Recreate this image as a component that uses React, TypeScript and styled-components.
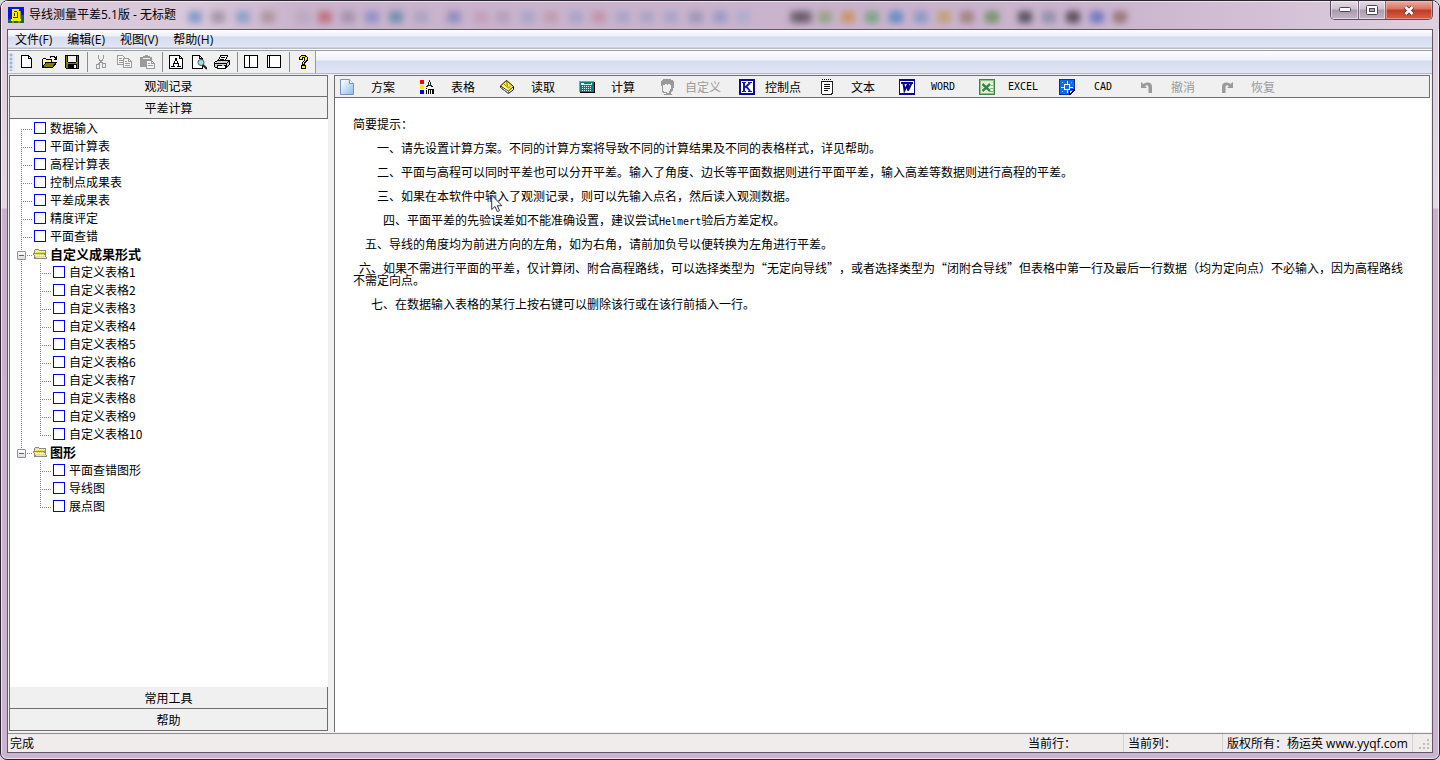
import React from "react";
import styled, { createGlobalStyle, css } from "styled-components";

const SONG = '"Noto Sans CJK SC", sans-serif';
const UI = '"Open Sans", "Noto Sans CJK SC", sans-serif';
const LINE = "#6f6f6f";
const FACE = "#f0f0f0";

const GlobalStyle = createGlobalStyle`
  *, *::before, *::after { box-sizing: border-box; }
  body { margin: 0; background: #d8d4da; color: #000; font: 12px/18px ${SONG}; text-spacing-trim: space-all; }
  button { font: inherit; color: inherit; border: 0; padding: 0; margin: 0; background: none; border-radius: 0; }
  svg { display: block; flex: none; }
`;

/* ---------- window frame ---------- */

const Frame = styled.div`
  display: flex;
  flex-direction: column;
  min-height: 100vh;
  padding: 0 6px 6px;
  border: 1px solid #2a2430;
  border-radius: 8px 8px 7px 7px;
  background: linear-gradient(180deg, #ddcfde 0, #e4d8e4 207px, #cbb0cc 208px, #ccb3d0 100%);
  box-shadow: inset 0 0 0 1px rgba(255, 255, 255, 0.65);
`;

const TitleBar = styled.header`
  position: relative;
  display: flex;
  align-items: flex-start;
  height: 28px;
  margin: 0 -6px;
  padding: 0 6px 0 7px;
  border-radius: 7px 7px 0 0;
  overflow: hidden;
  background: linear-gradient(90deg, #dccbdc 0, #d9c8da 190px, #c9b3cd 300px, #c9b3cd 75%, #d3c0d6 88%, #dfd0e0 100%);
  box-shadow: inset 0 1px 0 rgba(255, 255, 255, 0.6), inset 1px 0 0 rgba(255, 255, 255, 0.6);
`;

const Ghosts = styled.svg`
  position: absolute;
  left: 0;
  top: 0;
  filter: blur(3px);
`;

const Title = styled.h1`
  position: relative;
  flex: 1;
  margin: 5px 0 0 5px;
  font: 12px/18px ${UI};
`;

const AppIcon = styled.svg`
  position: relative;
  margin-top: 6px;
`;

const Captions = styled.div`
  position: relative;
  display: flex;
  height: 19px;
  border: 1px solid #5b4c5e;
  border-top: 0;
  border-radius: 0 0 5px 5px;
  overflow: hidden;
`;

const Caption = styled.button<{ $w: number; $close?: boolean }>`
  display: grid;
  place-items: center;
  width: ${(p) => p.$w}px;
  box-shadow: inset 0 0 0 1px rgba(255, 255, 255, 0.5);
  background: linear-gradient(#e5dbe6 0, #cfc1d2 45%, #a999ad 50%, #c4b5c8 100%);
  & + & { border-left: 1px solid #76687a; }
  ${(p) =>
    p.$close &&
    css`
      background: linear-gradient(#eab0a4 0, #d9705e 45%, #c03a22 50%, #d8614a 100%);
      box-shadow: inset 0 0 0 1px rgba(255, 200, 190, 0.5);
    `}
`;

const Client = styled.div`
  flex: 1;
  display: flex;
  flex-direction: column;
  border: 1px solid #5e5862;
  background: ${FACE};
`;

/* ---------- menu and standard toolbar ---------- */

const MenuBar = styled.nav`
  display: flex;
  height: 21px;
  padding-left: 7px;
  gap: 15px;
  border-bottom: 1px solid #9c9ca6;
  font: 12px/20px ${UI};
  background: linear-gradient(#fdfdff 0, #eef1f9 6px, #d5dcee 7px, #e2e6f5 17px, #b9bdca 18px, #b9bdca 19px, #fff 19px);
`;

const ToolRow = styled.div`
  display: flex;
  height: 24px;
  border-bottom: 1px solid ${FACE};
  background: linear-gradient(#fdfdff 0, #eef1f9 9px, #d5dcee 10px, #e2e6f5 22px, #b3b7c4 22px);
`;

const ToolBand = styled.div`
  display: flex;
  align-items: stretch;
  height: 22px;
  background: ${FACE};
  border-right: 1px solid #9a9a9a;
`;

const Grip = styled.div`
  width: 7px;
  margin: 2px 0;
  background: radial-gradient(circle at 3px 2px, #a9b3d0 1px, transparent 2px) 0 0 / 7px 4px #e6eaf6;
`;

const ToolButton = styled.button`
  width: 23px;
  padding: 3px 4px 3px 3px;
`;

const Separator = styled.span`
  width: 6px;
  margin: 1px 0;
  background: linear-gradient(#8a8a8a, #8a8a8a) 3px 0 / 1px 100% no-repeat;
`;

/* ---------- body ---------- */

const Body = styled.div`
  flex: 1;
  display: flex;
  gap: 6px;
  padding: 0 1px 1px;
`;

const Sidebar = styled.aside`
  flex: none;
  display: flex;
  flex-direction: column;
  width: 319px;
  margin-bottom: 1px;
  border-left: 1px solid ${LINE};
  background: #fff;
`;

const SideTab = styled.button<{ $top?: boolean }>`
  height: 22px;
  text-align: center;
  line-height: 20px;
  background: ${FACE};
  border-right: 1px solid ${LINE};
  border-bottom: 1px solid ${LINE};
  ${(p) => p.$top && `border-top: 1px solid ${LINE};`}
`;

const Tree = styled.ul`
  flex: 1;
  margin: 0;
  padding: 0 0 0 11px;
  list-style: none;
`;

const SubTree = styled.ul<{ $last?: boolean }>`
  margin: 0;
  padding: 0 0 0 19px;
  list-style: none;
  background: ${(p) =>
    p.$last ? "none" : "repeating-linear-gradient(#808080 0 1px, transparent 1px 2px) 0 0 / 1px 100% no-repeat"};
`;

const NodeLabel = styled.label<{ $last?: boolean; $first?: boolean }>`
  display: flex;
  align-items: center;
  height: 18px;
  padding-left: 13px;
  background:
    repeating-linear-gradient(90deg, #808080 0 1px, transparent 1px 2px) 0 10px / 12px 1px no-repeat,
    repeating-linear-gradient(#808080 0 1px, transparent 1px 2px) 0 ${(p) => (p.$first ? 10 : 0)}px / 1px
      ${(p) => (p.$last ? "10px" : "100%")} no-repeat;
`;

const NodeBox = styled.input`
  appearance: none;
  width: 12px;
  height: 12px;
  margin: 0 4px 0 0;
  border: 1px solid #0000ff;
  background: #fff;
  &:checked { background: #0000ff; }
`;

const FolderRow = styled.div<{ $last?: boolean }>`
  display: flex;
  align-items: center;
  height: 18px;
  font-size: 13px;
  font-weight: 700;
  background:
    repeating-linear-gradient(90deg, #808080 0 1px, transparent 1px 2px) 4px 10px / 8px 1px no-repeat,
    repeating-linear-gradient(#808080 0 1px, transparent 1px 2px) 0 0 / 1px ${(p) => (p.$last ? "6px" : "100%")} no-repeat;
  svg { margin-right: 3px; }
`;

const Toggle = styled.button`
  width: 9px;
  height: 9px;
  margin: 2px 7px 0 -4px;
  border: 1px solid #919191;
  border-radius: 1px;
  background: linear-gradient(#4a62a5, #4a62a5) center / 5px 1px no-repeat, linear-gradient(#fff, #dcdcdc);
`;

const Panel = styled.main`
  flex: 1;
  min-width: 0;
  display: flex;
  flex-direction: column;
  border-left: 1px solid ${LINE};
  background: #fff;
`;

const ActionBar = styled.div`
  display: flex;
  height: 23px;
  margin-right: 1px;
  padding-left: 4px;
  border: 1px solid ${LINE};
  border-left: 0;
  background: ${FACE};
`;

const Action = styled.button`
  display: grid;
  grid-template-columns: 16px 40px;
  column-gap: 8px;
  align-items: center;
  width: 80px;
  height: 21px;
  white-space: nowrap;
  text-align: center;
  &:disabled { color: #9b9b9b; }
`;

const Latin = styled.span`
  font: 10px/8px "DejaVu Sans Mono", monospace;
`;

const Notes = styled.article`
  position: relative;
  flex: 1;
  padding: 20px 20px 0 18px;
  line-height: 12px;
`;

const Note = styled.p<{ $indent?: number }>`
  margin: 0 0 12px;
  text-indent: ${(p) => p.$indent ?? 0}px;
`;

const Pointer = styled.svg`
  position: absolute;
  left: 156px;
  top: 96px;
`;

/* ---------- status bar ---------- */

const StatusBar = styled.footer`
  display: flex;
  height: 19px;
  border-top: 1px solid #8f8f8f;
  background: #f0ecec;
  font: 12px/19px ${UI};
`;

const StatusCell = styled.span<{ $w?: number }>`
  ${(p) => (p.$w ? `width: ${p.$w}px; padding-left: 4px; border-right: 1px solid #d6d2d2;` : "flex: 1; padding-left: 2px;")}
  white-space: nowrap;
`;

const SizeGrip = styled.svg`
  margin: 5px 2px 0 6px;
`;

/* ---------- icons ---------- */

const Icon = ({ children, soft }: { children: React.ReactNode; soft?: boolean }) => (
  <svg width="16" height="16" viewBox="0 0 16 16" fill="none" shapeRendering={soft ? "auto" : "crispEdges"} aria-hidden="true">
    {children}
  </svg>
);

const NewIcon = () => (
  <Icon>
    <path d="M3.5 1.5h7l3 3v9h-10z" fill="#fff" stroke="#000" />
    <path d="M10.5 1.5v3h3" stroke="#000" />
  </Icon>
);
const OpenIcon = () => (
  <Icon>
    <path d="M1.5 13.5v-8l1-1h2l1 1h5v3" fill="#ffff80" stroke="#000" />
    <path d="M1.5 13.5l3.5-5h10.5l-4 5z" fill="#808000" stroke="#000" />
    <path d="M9 3.5l1-1h3l1 1 1 1M15.5 2v3h-3" stroke="#000" />
  </Icon>
);
const SaveIcon = () => (
  <Icon>
    <path d="M1.5 1.5h13v13h-12l-1-1z" fill="#808000" stroke="#000" />
    <path d="M4 2h8v6H4z" fill="#f0f0f0" />
    <path d="M3 2h1v6H3zM12 2h1v6h-1zM4 8h8v1H4zM4 10h9v4H4z" fill="#000" />
    <path d="M10 11h2v3h-2z" fill="#fff" />
  </Icon>
);
const CutIcon = () => (
  <Icon>
    <path d="M5.5 1v3l1 2 4 4M10.5 1v3l-1 2-4 4" stroke="#9a9a9a" />
    <path d="M3.5 10.5h3v4h-3zM9.5 9.5h3v4h-3z" stroke="#9a9a9a" />
  </Icon>
);
const CopyIcon = () => (
  <Icon>
    <path d="M1.5 1.5h5l2 2v7h-7z" fill="#f6f6f6" stroke="#9a9a9a" />
    <path d="M3 4.5h3M3 6.5h4M3 8.5h4" stroke="#9a9a9a" />
    <path d="M7.5 4.5h5l3 3v6h-8z" fill="#f6f6f6" stroke="#9a9a9a" />
    <path d="M12.5 4.5v3h3M9 7.5h2M9 9.5h5M9 11.5h5" stroke="#9a9a9a" />
  </Icon>
);
const PasteIcon = () => (
  <Icon>
    <path d="M1 3h3V2h2V1h3v1h2v1h2v4H7v6H1z" fill="#9a9a9a" />
    <path d="M4 4h7v1H4z" fill="#eee" />
    <path d="M7.5 6.5h5l3 3v5h-8z" fill="#f6f6f6" stroke="#9a9a9a" />
    <path d="M12.5 6.5v3h3M9 9.5h2M9 11.5h5" stroke="#9a9a9a" />
  </Icon>
);
const FontIcon = () => (
  <Icon>
    <path d="M1.5 1.5h10l3 3v10h-13z" fill="#fff" stroke="#000" />
    <path d="M11.5 1.5v3h3" stroke="#000" />
    <path d="M3 12.5h4M9 12.5h4M7 4.500h2M5 9.500h5" stroke="#000" />
    <path d="M7 5h1v2H7zM6 7h1v3H6zM5 10h1v2H5zM8 5h1v2H8zM9 7h1v2H9zM9 9h2v3h-1v-2H9z" fill="#000" />
  </Icon>
);
const PreviewIcon = () => (
  <Icon>
    <path d="M11.5 14.5h-10v-13h7l3 3v9" fill="#fff" stroke="#000" />
    <path d="M8.5 1.5v3h3" stroke="#000" />
    <circle cx="10" cy="8.5" r="3" fill="#8fe8f0" stroke="#555" shapeRendering="auto" />
    <path d="M12 11l4 4" stroke="#222" strokeWidth="2" shapeRendering="auto" />
  </Icon>
);
const PrintIcon = () => (
  <Icon>
    <path d="M4.5 6.5l2-5h7l-2 5" fill="#fff" stroke="#000" />
    <path d="M7 3.5h4M6 5.5h4" stroke="#000" />
    <path d="M.5 8.5l3-2h12v4l-3 3h-11l-1-1z" fill="#d0d0d0" stroke="#000" />
    <path d="M1 9.5h11.5M12.5 9.5l3-3M12.5 9.5v4" stroke="#000" />
    <path d="M3.5 11.5h8v3h-8z" fill="#fff" stroke="#000" />
    <path d="M8 11h2v1H8z" fill="#e0e000" />
  </Icon>
);
const SplitIcon = ({ at }: { at: number }) => (
  <Icon>
    <path d="M1.5 1.5h13v12h-13z" fill="#fff" stroke="#000" />
    <path d={`M${at}.5 2v11`} stroke="#000" />
  </Icon>
);
const HelpIcon = () => (
  <Icon>
    <path d="M6 1h5v1h1v1h1v4h-1v1h-1v1h-1v2h1v4H6v-4h1V8h1V7h1V4H8v2H4V3h1V2h1z" fill="#000" />
    <path d="M6 2h4v1h2v3h-1v1h-1v1H9v2H8V8h1V7h1V3H7v2H5V3h1zM7 12h3v2H7z" fill="#ffee00" />
  </Icon>
);

const PlanIcon = () => (
  <Icon soft>
    <defs>
      <linearGradient id="plan" x1="0" y1="0" x2="1" y2="1">
        <stop offset="0.200" stopColor="#eef6ff" />
        <stop offset="1" stopColor="#86bcf0" />
      </linearGradient>
    </defs>
    <path d="M1.500.5h9l4 4v11h-13z" fill="url(#plan)" stroke="#7a90c0" />
    <path d="M10.500.5v4h4" fill="#fff" stroke="#7a90c0" />
  </Icon>
);
const TableIcon = () => (
  <Icon>
    <path d="M1 1h4v4H1z" fill="#f00" />
    <path d="M1 6h4v4H1z" fill="#ffe800" />
    <path d="M1 11h4v4H1z" fill="#00f" />
    <path d="M10 1h1v2h-1zM9 3h1v3H9zM11 3h1v3h-1zM8 6h5v1H8zM7 7h2v1H7zM12 7h2v1h-2z" fill="#222" />
    <path d="M7 9h1v1H7zM7 11h1v4H7zM9 10h3v5h-1v-4h-1v4H9zM12 10h3v5h-2v-4h-1z" fill="#000" />
  </Icon>
);
const ReadIcon = () => (
  <Icon soft>
    <path d="M1.500 7l6-5.500 7 6v3l-5 4-8-6z" fill="#fff" stroke="#111" />
    <path d="M1.500 7l6-5.500 7 6-5 4.500z" fill="#fff04a" stroke="#3a3a00" />
    <path d="M4.500 4.500l5 4.500 2.500-2.500M7.500 2l1 5" stroke="#8a7a00" />
    <path d="M4 7l5 4" stroke="#fff" />
    <path d="M2 9l7 5M9.500 12v2.500" stroke="#777" />
  </Icon>
);
const CalcIcon = () => (
  <Icon>
    <path d="M1 3h15v11H1z" fill="#000" />
    <path d="M0 2h15v11H0z" fill="#008080" />
    <path d="M.5 12.5v-10h14" stroke="#40c0c0" />
    <path d="M2 4h11v2H2z" fill="#c8fff0" />
    <path d="M5 4h7v1H5z" fill="#008080" />
    <path d="M3 7.5h10M3 9.5h10M3 11.5h10" stroke="#d8ffff" strokeDasharray="1 1" />
  </Icon>
);
const CustomIcon = () => (
  <Icon>
    <path
      d="M4 0h8v1h2v1h1v7h-1v3h-1v1h-1v2h1v1H5v-1h2v-1h3v-2h1v-2h1V6h-1V5H9v1H8V5H6v1H4v3H3V7H2V2h1V1h1z"
      fill="#9a9a9a"
    />
    <path d="M3 9h1v3h1v1h3v1H4v-1H3z" fill="#9a9a9a" />
  </Icon>
);
const ControlIcon = () => (
  <Icon>
    <path d="M0 0h16v16H0z" fill="#0a0a9a" />
    <path d="M2 2h12v12H2z" fill="#fff" />
    <path d="M3 3.500h4M3 12.500h4M9 3.500h4M9 12.500h4" stroke="#1818b0" />
    <path d="M5 4v8M11 4L6 8.500M7 7l4 5" stroke="#1818b0" strokeWidth="2" shapeRendering="auto" />
  </Icon>
);
const TextIcon = () => (
  <Icon>
    <path d="M2.5 2.5h11v11l-1 2h-9l-1-1z" fill="#fff" stroke="#222" />
    <path d="M3 .5h10M4 2.5h10" stroke="#000" strokeDasharray="1 1" />
    <path d="M5 5.5h6M5 7.5h6M5 9.5h6M5 11.5h4" stroke="#111" />
  </Icon>
);
const WordIcon = () => (
  <Icon>
    <path d="M0 0h16v16H0z" fill="#0a0a8a" />
    <path d="M1 2h14v1H1zM1 2h1v12H1zM14 3h1v11h-1zM1 13h14v1H1z" fill="#fff" />
    <path d="M2 5h12v8H2z" fill="#fff" />
    <path d="M4.500 4l1 7.500L9 5v6.500L12.500 4" stroke="#0a0a8a" strokeWidth="2" shapeRendering="auto" />
  </Icon>
);
const ExcelIcon = () => (
  <Icon>
    <path d="M.5.5h15v15H.5z" fill="#dcefd6" stroke="#3c8240" />
    <path d="M1.5 1.5h13v13h-13z" stroke="#8fc286" />
    <path d="M10 4h4v9h-4z" fill="#fff" />
    <path d="M10 6.5h4M10 9.5h4M10 12.500h4" stroke="#7fb57a" />
    <path d="M3.500 5l7.500 7M11 5l-7.500 7" stroke="#fff" strokeWidth="4" shapeRendering="auto" />
    <path d="M3.500 5l7.500 7M11 5l-7.500 7" stroke="#2f8a35" strokeWidth="2.400" shapeRendering="auto" />
  </Icon>
);
const CadIcon = () => (
  <Icon>
    <path d="M0 0h16v11l-5 5H0z" fill="#0a6cf4" />
    <path d="M.5 15.5V.5h15v10M.5 15.5h10" stroke="#0530a0" />
    <path d="M5.500 5.500h5v5h-5zM8.500 2v3M8.500 11v3M2 8.500h3M11 8.500h3" stroke="#fff" />
    <path d="M11 15.500v-4h5z" fill="#fff" />
    <path d="M10.500 15.500v-4l1-1h4M11 15.500l5-5" stroke="#000" />
    <path d="M3 3h1v1H3zM12 3h1v1h-1zM3 12h1v1H3z" fill="#9fd0ff" />
  </Icon>
);
const UndoIcon = ({ flip }: { flip?: boolean }) => (
  <Icon soft>
    <g transform={flip ? "translate(16 0) scale(-1 1)" : undefined}>
      <path d="M2 3v6h6L6 7c2-1.500 3.500-1 3.500 1.500V14H13V7.500C13 3 8 2.500 4.500 5z" fill="#9a9a9a" />
    </g>
  </Icon>
);
const FolderIcon = () => (
  <svg width="14" height="14" viewBox="0 0 14 14" fill="none" shapeRendering="crispEdges" aria-hidden="true">
    <path d="M1.500 11.500v-8l1-1h3l1 1h6v8z" fill="#e6e29a" stroke="#8a8a8a" />
    <path d="M.5 6.500h11l2 5h-11z" fill="#ece79a" stroke="#8a8a8a" />
    <path d="M3 8.500h9M3 4.500h9" stroke="#fff" strokeDasharray="1 1" />
    <path d="M4 7.500h8M4 9.500h8M3 5.500h9" stroke="#e0d850" strokeDasharray="1 1" />
  </svg>
);

/* ---------- data ---------- */

const menus = ["文件(F)", "编辑(E)", "视图(V)", "帮助(H)"];

const tools: (null | [string, React.ReactNode])[] = [
  ["新建", <NewIcon />],
  ["打开", <OpenIcon />],
  ["保存", <SaveIcon />],
  null,
  ["剪切", <CutIcon />],
  ["复制", <CopyIcon />],
  ["粘贴", <PasteIcon />],
  null,
  ["字体", <FontIcon />],
  ["打印预览", <PreviewIcon />],
  ["打印", <PrintIcon />],
  null,
  ["左侧栏", <SplitIcon at={6} />],
  ["窄侧栏", <SplitIcon at={3} />],
  null,
  ["关于", <HelpIcon />],
];

const actions: { label: string; icon: React.ReactNode; latin?: boolean; off?: boolean }[] = [
  { label: "方案", icon: <PlanIcon /> },
  { label: "表格", icon: <TableIcon /> },
  { label: "读取", icon: <ReadIcon /> },
  { label: "计算", icon: <CalcIcon /> },
  { label: "自定义", icon: <CustomIcon />, off: true },
  { label: "控制点", icon: <ControlIcon /> },
  { label: "文本", icon: <TextIcon /> },
  { label: "WORD", icon: <WordIcon />, latin: true },
  { label: "EXCEL", icon: <ExcelIcon />, latin: true },
  { label: "CAD", icon: <CadIcon />, latin: true },
  { label: "撤消", icon: <UndoIcon />, off: true },
  { label: "恢复", icon: <UndoIcon flip />, off: true },
];

const sheets = ["数据输入", "平面计算表", "高程计算表", "控制点成果表", "平差成果表", "精度评定", "平面查错"];
const customSheets = Array.from({ length: 10 }, (_, i) => `自定义表格${i + 1}`);
const drawings = ["平面查错图形", "导线图", "展点图"];

const ghosts: [number, string][] = [
  [194, "#6d8cc4"], [217, "#9a8a9c"], [242, "#7f97c6"], [267, "#a88a92"], [302, "#b9a6bd"], [324, "#c0606c"],
  [347, "#9b8aa4"], [371, "#8388c8"], [395, "#5c86a8"], [420, "#a3a0c0"], [453, "#8084bc"], [480, "#c09ab4"],
  [502, "#ad9cb8"], [527, "#a3a2c6"], [550, "#c094a8"], [575, "#a0a0c8"], [598, "#c08ca0"], [622, "#a3a0c6"],
  [646, "#a3a0c6"], [670, "#a3a0c6"], [695, "#938fb4"], [719, "#8c94c4"], [742, "#a7acd0"], [796, "#5c525e"],
  [804, "#5c525e"], [824, "#8aa070"], [847, "#cc8c50"], [871, "#6aa070"], [895, "#4c80c4"], [920, "#7c92c4"],
  [943, "#c09c60"], [966, "#98766c"], [991, "#5f8c50"], [1024, "#3c3844"], [1048, "#8288a4"], [1072, "#3c3440"],
  [1096, "#5868c0"], [1119, "#8c6460"],
];

const TreeItem = ({ text, first, last }: { text: string; first?: boolean; last?: boolean }) => (
  <li>
    <NodeLabel $first={first} $last={last}>
      <NodeBox type="checkbox" />
      {text}
    </NodeLabel>
  </li>
);

export default function App() {
  return (
    <>
      <GlobalStyle />
      <Frame lang="zh-CN">
        <TitleBar>
          <Ghosts width="1140" height="28" aria-hidden="true">
            {ghosts.map(([x, fill]) => (
              <rect key={x} x={x - 7} y="10" width="14" height="12" rx="3" fill={fill} opacity="0.75" />
            ))}
          </Ghosts>
          <AppIcon width="16" height="16" viewBox="0 0 16 16" shapeRendering="crispEdges" aria-hidden="true">
            <path d="M0 0h16v16H0z" fill="#0018d8" />
            <path d="M10 8h6v8H0v-4h10z" fill="#0c6a48" />
            <path d="M4 2h7v2h1v8h1v2H3v-2h1z" fill="#ffee00" />
            <path d="M6 4h3v1H6zM6 6h1v3H6zM9 5h1v5H9zM5 10h5v1H5z" fill="#3a3a00" />
            <path d="M12 4h1v8h-1zM4 14h2v2H4zM10 14h2v2h-2z" fill="#a08c00" />
          </AppIcon>
          <Title>导线测量平差5.1版 - 无标题</Title>
          <Captions>
            <Caption $w={27} aria-label="最小化">
              <svg width="12" height="6" aria-hidden="true">
                <rect x=".5" y=".5" width="11" height="4" rx="1" fill="#fff" stroke="#4c4452" />
              </svg>
            </Caption>
            <Caption $w={27} aria-label="最大化">
              <svg width="12" height="10" aria-hidden="true">
                <rect x=".5" y=".5" width="11" height="9" rx="1" fill="#fff" stroke="#4c4452" />
                <rect x="3.5" y="3.5" width="5" height="3" fill="#b5a7b9" stroke="#4c4452" />
              </svg>
            </Caption>
            <Caption $w={47} $close aria-label="关闭">
              <svg width="12" height="11" viewBox="0 0 12 11" aria-hidden="true">
                <path d="M2.5 2l7 7M9.5 2l-7 7" stroke="#5a3438" strokeWidth="4.500" />
                <path d="M2.5 2l7 7M9.5 2l-7 7" stroke="#fff" strokeWidth="2.600" />
              </svg>
            </Caption>
          </Captions>
        </TitleBar>

        <Client>
          <MenuBar>
            {menus.map((m) => (
              <button key={m}>{m}</button>
            ))}
          </MenuBar>
          <ToolRow>
            <ToolBand>
              <Grip />
              {tools.map((t, i) =>
                t ? (
                  <ToolButton key={i} aria-label={t[0]}>
                    {t[1]}
                  </ToolButton>
                ) : (
                  <Separator key={i} />
                )
              )}
            </ToolBand>
          </ToolRow>

          <Body>
            <Sidebar>
              <SideTab $top>观测记录</SideTab>
              <SideTab>平差计算</SideTab>
              <Tree>
                {sheets.map((s, i) => (
                  <TreeItem key={s} text={s} first={i === 0} />
                ))}
                <li>
                  <FolderRow>
                    <Toggle aria-label="折叠" />
                    <FolderIcon />
                    自定义成果形式
                  </FolderRow>
                  <SubTree>
                    {customSheets.map((s, i) => (
                      <TreeItem key={s} text={s} last={i === customSheets.length - 1} />
                    ))}
                  </SubTree>
                </li>
                <li>
                  <FolderRow $last>
                    <Toggle aria-label="折叠" />
                    <FolderIcon />
                    图形
                  </FolderRow>
                  <SubTree $last>
                    {drawings.map((s, i) => (
                      <TreeItem key={s} text={s} last={i === drawings.length - 1} />
                    ))}
                  </SubTree>
                </li>
              </Tree>
              <SideTab>常用工具</SideTab>
              <SideTab>帮助</SideTab>
            </Sidebar>

            <Panel>
              <ActionBar>
                {actions.map((a) => (
                  <Action key={a.label} disabled={a.off}>
                    {a.icon}
                    {a.latin ? <Latin>{a.label}</Latin> : <span>{a.label}</span>}
                  </Action>
                ))}
              </ActionBar>
              <Notes>
                <Note>简要提示：</Note>
                <Note $indent={24}>一、请先设置计算方案。不同的计算方案将导致不同的计算结果及不同的表格样式，详见帮助。</Note>
                <Note $indent={24}>
                  二、平面与高程可以同时平差也可以分开平差。输入了角度、边长等平面数据则进行平面平差，输入高差等数据则进行高程的平差。
                </Note>
                <Note $indent={24}>三、如果在本软件中输入了观测记录，则可以先输入点名，然后读入观测数据。</Note>
                <Note $indent={30}>
                  四、平面平差的先验误差如不能准确设置，建议尝试<Latin>Helmert</Latin>验后方差定权。
                </Note>
                <Note $indent={12}>五、导线的角度均为前进方向的左角，如为右角，请前加负号以便转换为左角进行平差。</Note>
                <Note $indent={6}>
                  六、如果不需进行平面的平差，仅计算闭、附合高程路线，可以选择类型为“无定向导线”，或者选择类型为“闭附合导线”但表格中第一行及最后一行数据（均为定向点）不必输入，因为高程路线不需定向点。
                </Note>
                <Note $indent={18}>七、在数据输入表格的某行上按右键可以删除该行或在该行前插入一行。</Note>
                <Pointer width="12" height="19" viewBox="0 0 12 19" aria-hidden="true">
                  <path d="M.7 1v14.500l3.300-3 2.300 5.200 2.300-1-2.300-5h4.600z" fill="#f6f6f8" stroke="#34344a" />
                </Pointer>
              </Notes>
            </Panel>
          </Body>

          <StatusBar>
            <StatusCell>完成</StatusCell>
            <StatusCell $w={100}>当前行：</StatusCell>
            <StatusCell $w={99}>当前列：</StatusCell>
            <StatusCell $w={190}>版权所有：杨运英 www.yyqf.com</StatusCell>
            <SizeGrip width="11" height="11" aria-hidden="true">
              <path d="M8 0h2v2H8zM4 4h2v2H4zM8 4h2v2H8zM0 8h2v2H0zM4 8h2v2H4zM8 8h2v2H8z" fill="#c2bebe" />
            </SizeGrip>
          </StatusBar>
        </Client>
      </Frame>
    </>
  );
}
